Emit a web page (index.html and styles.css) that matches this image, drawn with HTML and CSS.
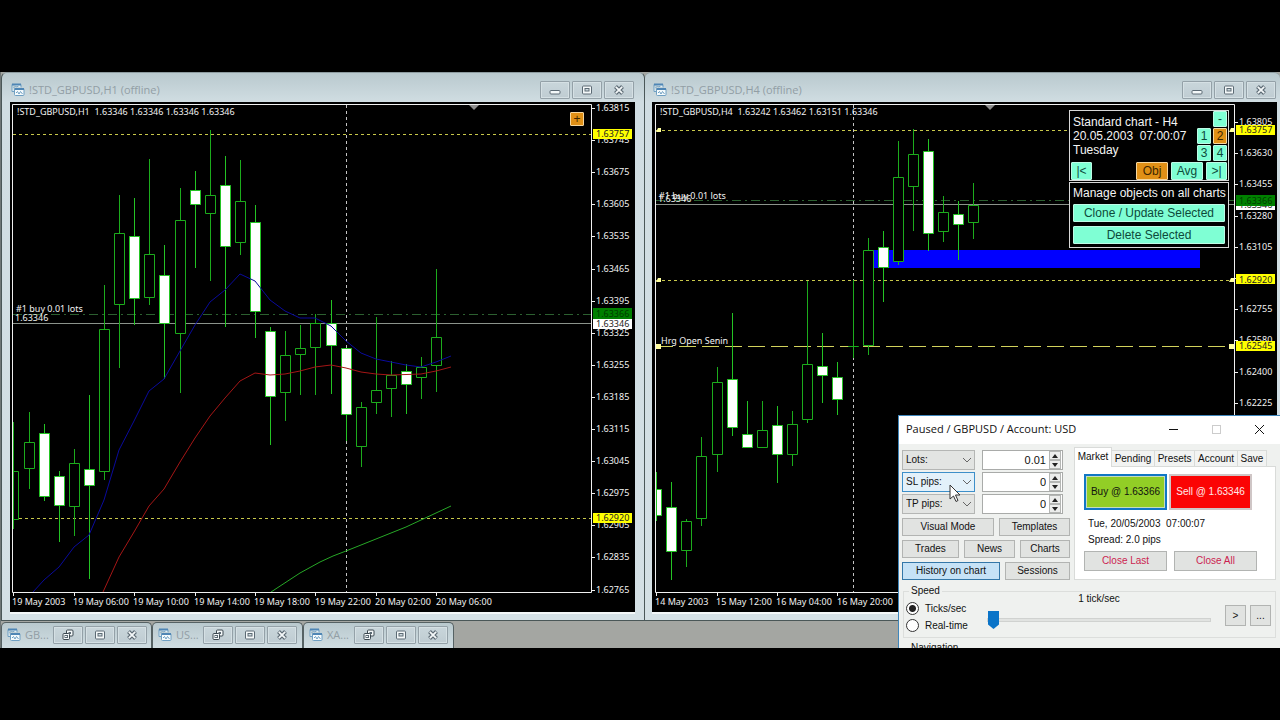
FILE: index.html
```html
<!DOCTYPE html>
<html lang="en">
<head>
<meta charset="utf-8">
<title>Forex Simulator</title>
<link rel="stylesheet" href="styles.css">
</head>
<body>
<svg class="defs" aria-hidden="true">
  <symbol id="i-chart" viewBox="0 0 14 14"><path d="M1 1.500h9v3M1 1.500v7h2" fill="#e4f0f6" stroke="#6f9fc2"/><path d="M1 1.500h9" stroke="#4f86b5" stroke-width="2"/><path d="M2.500 5l2-2 1 1 2-1" fill="none" stroke="#7fa8c4"/><rect x="3.500" y="5.500" width="9.500" height="7" rx="1" fill="#f4fafc" stroke="#6f9fc2"/><path d="M3.500 6h9.500" stroke="#4f86b5" stroke-width="2"/><path d="M5 10l1.500-1.500 1.500 2.500 1.500-2.500 2 2.500" fill="none" stroke="#6f9fc2"/></symbol>
  <symbol id="i-min" viewBox="0 0 12 12"><rect x="1" y="6.500" width="10" height="3.500" rx="1" fill="#f4f8f9" stroke="#5c6a74"/></symbol>
  <symbol id="i-max" viewBox="0 0 12 12"><rect x="1.500" y="2" width="9" height="8" rx="1" fill="#f4f8f9" stroke="#5c6a74"/><rect x="4" y="4.500" width="4" height="2.500" fill="#cfdbe0" stroke="#5c6a74"/></symbol>
  <symbol id="i-close" viewBox="0 0 12 12"><path d="M2.500 2.500l7 7M9.500 2.500l-7 7" stroke="#5c6a74" stroke-width="4"/><path d="M2.800 2.800l6.400 6.400M9.200 2.800l-6.400 6.400" stroke="#f4f8f9" stroke-width="1.800"/></symbol>
  <symbol id="i-restore" viewBox="0 0 12 12"><rect x="4.500" y="1" width="6.500" height="6" rx="1" fill="#f4f8f9" stroke="#3c4850"/><rect x="6.500" y="3" width="2.500" height="2" fill="#5c6a74"/><rect x="1" y="4.500" width="6.500" height="6" rx="1" fill="#f4f8f9" stroke="#3c4850"/><rect x="3" y="6.500" width="2.500" height="2" fill="none" stroke="#5c6a74"/></symbol>
</svg>

<main class="workspace">
  <div class="windows">
    <section class="window window-left">
      <header class="titlebar">
        <svg class="app-icon"><use href="#i-chart"/></svg>
        <h2>!STD_GBPUSD,H1 (offline)</h2>
        <div class="win-buttons">
          <button aria-label="Minimize"><svg><use href="#i-min"/></svg></button>
          <button aria-label="Maximize"><svg><use href="#i-max"/></svg></button>
          <button aria-label="Close"><svg><use href="#i-close"/></svg></button>
        </div>
      </header>
      <div class="chart-frame">
        <svg class="chart" viewBox="10 102 625 510" role="img" aria-label="GBPUSD H1 candlestick chart">
          <g class="back">
            <path class="vline" d="M346.500 105V592"/>
            <path class="level" d="M13 134.500H591M13 518.500H591"/>
            <path class="order" d="M13 314.500H591"/>
            <path class="bid" d="M13 323.500H591"/>
          </g>
          <g id="candles-h1"></g>
          <path class="ma blue" d="M33 592L44 580L59 567L74 547L89 535L104 500L119 450L134 421L149 391L164 379L180 351L195 325L210 302L225 290L240 274L255 281L270 300L285 311L300 318L315 318L331 326L346 341L361 353L376 359L391 362L406 365L421 367L436 362L451 356"/>
          <path class="ma red" d="M103 592L119 557L134 532L149 506L164 489L180 462L195 438L210 416L225 398L240 381L255 373L270 375L285 374L300 371L315 367L331 365L346 368L361 372L376 374L391 375L421 374L436 371L451 367"/>
          <path class="ma green" d="M271 592L300 573L320 562L333 556L346 551L376 539L406 527L421 520L451 506"/>
          <path class="frame" d="M12.500 592.500V104.500H591.500V592.500Z"/>
          <path class="frame" d="M13.500 593v3M74.500 593v3M134.500 593v3M195.500 593v3M255.500 593v3M315.500 593v3M376.500 593v3M436.500 593v3"/>
          <path d="M469 105h10l-5 5z" fill="#8c8c8c"/>
          <g class="txt">
            <text x="17" y="115">!STD_GBPUSD,H1  1.63346 1.63346 1.63346 1.63346</text>
            <text x="16" y="312">#1 buy 0.01 lots</text>
            <text x="15" y="321">1.63346</text>
            <text x="12" y="605">19 May 2003</text><text x="73" y="605">19 May 06:00</text><text x="133" y="605">19 May 10:00</text><text x="194" y="605">19 May 14:00</text><text x="254" y="605">19 May 18:00</text><text x="315" y="605">19 May 22:00</text><text x="375" y="605">20 May 02:00</text><text x="436" y="605">20 May 06:00</text>
          </g>
          <g id="axis-h1"></g>
          <rect x="593" y="129" width="39" height="10" fill="#ff0"/><text class="txt dark" x="596" y="137">1.63757</text>
          <rect x="593" y="308" width="39" height="11" fill="#008000"/><text class="txt deep" x="596" y="317">1.63366</text>
          <rect x="593" y="319" width="39" height="10" fill="#fff"/><text class="txt dark" x="596" y="327">1.63346</text>
          <rect x="593" y="513" width="39" height="10" fill="#ff0"/><text class="txt dark" x="596" y="521">1.62920</text>
        </svg>
        <button class="mini orange expand" aria-label="Expand panel">+</button>
      </div>
    </section>

    <section class="window window-right">
      <header class="titlebar">
        <svg class="app-icon"><use href="#i-chart"/></svg>
        <h2>!STD_GBPUSD,H4 (offline)</h2>
        <div class="win-buttons">
          <button aria-label="Minimize"><svg><use href="#i-min"/></svg></button>
          <button aria-label="Maximize"><svg><use href="#i-max"/></svg></button>
          <button aria-label="Close"><svg><use href="#i-close"/></svg></button>
        </div>
      </header>
      <div class="chart-frame">
        <svg class="chart" viewBox="652 102 625 510" role="img" aria-label="GBPUSD H4 candlestick chart">
          <path class="vline" d="M853.500 105V592"/>
          <rect x="873" y="250" width="327" height="18" fill="#00f"/>
          <path class="level" d="M656 130.500H1234M656 280.500H1234"/>
          <path class="order" d="M656 200.500H1234"/>
          <path class="bid" d="M656 204.500H1234"/>
          <path class="session" d="M656 346.500H1234"/>
          <g id="candles-h4"></g>
          <path class="frame" d="M655.500 592.500V104.500H1234.500V592.500Z"/>
          <path class="frame" d="M656.500 593v3M717.500 593v3M777.500 593v3M837.500 593v3"/>
          <path d="M985 105h10l-5 5z" fill="#8c8c8c"/>
          <path d="M656 344h5v5h-5zM1229 344h5v5h-5zM656 132l2-4h3v4zM656 282l2-4h3v4zM1229 132l2-4h3v4zM1229 282l2-4h3v4z" fill="#ffffa0"/>
          <g class="txt">
            <text x="660" y="115">!STD_GBPUSD,H4  1.63242 1.63462 1.63151 1.63346</text>
            <text x="659" y="199">#1 buy 0.01 lots</text>
            <text x="658" y="202">1.63346</text>
            <text x="661" y="344">Hrg Open Senin</text>
            <text x="655" y="605">14 May 2003</text><text x="716" y="605">15 May 12:00</text><text x="776" y="605">16 May 04:00</text><text x="837" y="605">16 May 20:00</text>
          </g>
          <g id="axis-h4"></g>
          <rect x="1236" y="125" width="39" height="10" fill="#ff0"/><text class="txt dark" x="1239" y="133">1.63757</text>
          <rect x="1236" y="200" width="39" height="10" fill="#fff"/><text class="txt dark" x="1239" y="208">1.63346</text>
          <rect x="1236" y="195" width="39" height="11" fill="#008000"/><text class="txt deep" x="1239" y="204">1.63366</text>
          <rect x="1236" y="274" width="39" height="10" fill="#ff0"/><text class="txt dark" x="1239" y="283">1.62920</text>
          <rect x="1236" y="341" width="39" height="10" fill="#ff0"/><text class="txt dark" x="1239" y="349">1.62545</text>
        </svg>
        <aside class="panel">
          <div class="panel-box panel-top">
            <div class="panel-info">
              <p>Standard chart - H4</p>
              <p>20.05.2003&nbsp; 07:00:07</p>
              <p>Tuesday</p>
            </div>
            <div class="panel-keys">
              <button class="mini last" aria-label="Collapse panel">-</button>
              <button class="mini">1</button><button class="mini orange">2</button>
              <button class="mini">3</button><button class="mini">4</button>
            </div>
            <div class="panel-nav">
              <button class="mini step">|&lt;</button>
              <button class="mini orange wide push">Obj</button>
              <button class="mini wide">Avg</button>
              <button class="mini step">&gt;|</button>
            </div>
          </div>
          <div class="panel-box panel-objects">
            <p>Manage objects on all charts</p>
            <button class="mini">Clone / Update Selected</button>
            <button class="mini">Delete Selected</button>
          </div>
        </aside>
      </div>
    </section>
  </div>

  <nav class="taskbar">
    <div class="task"><svg class="app-icon"><use href="#i-chart"/></svg><span>GB...</span>
      <div class="win-buttons"><button aria-label="Restore"><svg><use href="#i-restore"/></svg></button><button aria-label="Maximize"><svg><use href="#i-max"/></svg></button><button aria-label="Close"><svg><use href="#i-close"/></svg></button></div></div>
    <div class="task"><svg class="app-icon"><use href="#i-chart"/></svg><span>US...</span>
      <div class="win-buttons"><button aria-label="Restore"><svg><use href="#i-restore"/></svg></button><button aria-label="Maximize"><svg><use href="#i-max"/></svg></button><button aria-label="Close"><svg><use href="#i-close"/></svg></button></div></div>
    <div class="task"><svg class="app-icon"><use href="#i-chart"/></svg><span>XA...</span>
      <div class="win-buttons"><button aria-label="Restore"><svg><use href="#i-restore"/></svg></button><button aria-label="Maximize"><svg><use href="#i-max"/></svg></button><button aria-label="Close"><svg><use href="#i-close"/></svg></button></div></div>
  </nav>

  <section class="dialog">
    <header class="dialog-title">
      <h1>Paused / GBPUSD / Account: USD</h1>
      <button aria-label="Minimize"><svg viewBox="0 0 11 11"><path d="M1 5.500h9" stroke="#111"/></svg></button>
      <button aria-label="Maximize" disabled><svg viewBox="0 0 11 11"><rect x="1.500" y="1.500" width="8" height="8" fill="none" stroke="#ccc"/></svg></button>
      <button aria-label="Close"><svg viewBox="0 0 11 11"><path d="M1 1l9 9M10 1l-9 9" stroke="#111"/></svg></button>
    </header>
    <div class="dialog-body">
      <div class="columns">
        <div class="controls">
          <div class="field">
            <div class="drop"><select aria-label="Volume unit"><option>Lots:</option></select><svg viewBox="0 0 8 5"><path d="M0 0l4 4 4-4"/></svg></div>
            <div class="spin"><input type="text" value="0.01" aria-label="Lots"><div class="arrows"><button aria-label="Increase lots"><svg viewBox="0 0 6 4"><path d="M0 4l3-4 3 4z"/></svg></button><button aria-label="Decrease lots"><svg viewBox="0 0 6 4"><path d="M0 0l3 4 3-4z"/></svg></button></div></div>
          </div>
          <div class="field">
            <div class="drop hot"><select aria-label="Stop loss unit"><option>SL pips:</option></select><svg viewBox="0 0 8 5"><path d="M0 0l4 4 4-4"/></svg></div>
            <div class="spin"><input type="text" value="0" aria-label="SL pips"><div class="arrows"><button aria-label="Increase SL"><svg viewBox="0 0 6 4"><path d="M0 4l3-4 3 4z"/></svg></button><button aria-label="Decrease SL"><svg viewBox="0 0 6 4"><path d="M0 0l3 4 3-4z"/></svg></button></div></div>
          </div>
          <div class="field">
            <div class="drop"><select aria-label="Take profit unit"><option>TP pips:</option></select><svg viewBox="0 0 8 5"><path d="M0 0l4 4 4-4"/></svg></div>
            <div class="spin"><input type="text" value="0" aria-label="TP pips"><div class="arrows"><button aria-label="Increase TP"><svg viewBox="0 0 6 4"><path d="M0 4l3-4 3 4z"/></svg></button><button aria-label="Decrease TP"><svg viewBox="0 0 6 4"><path d="M0 0l3 4 3-4z"/></svg></button></div></div>
          </div>
          <div class="row row-modes"><button class="btn">Visual Mode</button><button class="btn">Templates</button></div>
          <div class="row row-lists"><button class="btn">Trades</button><button class="btn">News</button><button class="btn">Charts</button></div>
          <div class="row row-history"><button class="btn pressed">History on chart</button><button class="btn">Sessions</button></div>
        </div>
        <div class="market">
          <div class="tabs" role="tablist">
            <button role="tab" aria-selected="true">Market</button><button role="tab">Pending</button><button role="tab">Presets</button><button role="tab">Account</button><button role="tab">Save</button>
          </div>
          <div class="tab-page">
            <div class="deal"><button class="buy">Buy @ 1.63366</button><button class="sell">Sell @ 1.63346</button></div>
            <p>Tue, 20/05/2003&nbsp; 07:00:07</p>
            <p>Spread: 2.0 pips</p>
            <div class="closers"><button class="btn">Close Last</button><button class="btn">Close All</button></div>
          </div>
        </div>
      </div>
      <fieldset class="speed">
        <legend>Speed</legend>
        <div class="speed-grid">
          <div class="radios">
            <label><input type="radio" name="speed" checked>Ticks/sec</label>
            <label><input type="radio" name="speed">Real-time</label>
          </div>
          <div class="slider">
            <label for="rate">1 tick/sec</label>
            <input id="rate" type="range" min="0" max="20" value="0">
          </div>
          <div class="speed-buttons"><button class="btn">&gt;</button><button class="btn">...</button></div>
        </div>
      </fieldset>
      <fieldset class="navigation"><legend>Navigation</legend></fieldset>
    </div>
    <svg class="cursor" viewBox="0 0 12 19" aria-hidden="true"><path d="M1 1v14l3.500-3 2.500 5.500 2-1-2.500-5.500h4.500z" fill="#fff" stroke="#333"/></svg>
  </section>
</main>
<script src="chart.js"></script>
</body>
</html>
```
FILE: styles.css
```css
* { box-sizing: border-box; }
body {
  margin: 0;
  padding: 72px 0;
  min-height: 100vh;
  background: #000;
  font-family: "Liberation Sans", Arial, sans-serif;
  font-size: 10px;
  line-height: 12px;
  color: #111;
}
button, input, select { font: inherit; color: inherit; margin: 0; padding: 0; }
h1, h2, p { margin: 0; font-weight: normal; }
.defs { position: absolute; width: 0; height: 0; }

.workspace {
  position: relative;
  display: flex;
  flex-direction: column;
  gap: 1px;
  padding-left: 1px;
  overflow: hidden;
  background: linear-gradient(90deg, #6f7777 0 1px, #a4a6a2 1px);
}
.windows { display: grid; grid-template-columns: 644fr 635fr; }
.window {
  border: 1px solid #4a5758;
  border-top-color: #8d9b9f;
  border-radius: 6px 6px 0 0;
  background: linear-gradient(#b9c9ce, #d0dde2 29px, #d4e0e5);
  padding: 0 9px 6px 8px;
  min-width: 0;
}
.window-right { border-left: 0; border-right: 0; padding: 0 3px 6px 7px; }
.titlebar {
  display: flex;
  align-items: center;
  height: 29px;
  padding: 4px 1px 0 1px;
  gap: 4px;
}
.titlebar h2, .task span {
  flex: 1;
  font-family: "Open Sans", "Noto Sans", sans-serif;
  font-size: 11px;
  line-height: 16px;
  color: #929ea5;
}
.app-icon { width: 14px; height: 14px; flex: none; }
.win-buttons { display: flex; gap: 2px; }
.win-buttons button {
  display: grid;
  place-items: center;
  width: 30px;
  height: 18px;
  background: linear-gradient(#c9d6db, #bfccd2);
  border: 1px solid #94a1a8;
  border-radius: 1px;
  box-shadow: inset 0 0 0 1px #d5e0e4;
}
.win-buttons svg { width: 12px; height: 12px; }
.chart-frame { position: relative; background: #000; border-bottom: 2px solid #f3f7f8; }
.chart { display: block; width: 100%; height: auto; }

.txt, .dark, .deep { font: 9px "Noto Sans", "DejaVu Sans", sans-serif; fill: #f2f2f2; white-space: pre; }
.txt text { white-space: pre; }
.dark { fill: #222; }
.deep { fill: #003c00; }
.frame { fill: none; stroke: #f0f0f0; }
.vline { stroke: #c4c4c4; stroke-dasharray: 3 3; }
.level { stroke: #c8c84a; stroke-dasharray: 3 3; }
.order { stroke: #2c6030; stroke-dasharray: 9 4 2 4; }
.bid { stroke: #8b938b; }
.session { stroke: #d2d25c; stroke-dasharray: 17 6; }
.ma { fill: none; }
.ma.blue { stroke: #0a0a9c; }
.ma.red { stroke: #a51616; }
.ma.green { stroke: #27a827; }
.candle { stroke: #1cac1c; fill: #000; }
.candle.down { fill: #fff; stroke: #24c424; }

.mini {
  display: grid;
  place-items: center;
  height: 16px;
  min-width: 14px;
  background: #7fffd4;
  border: 1px solid #bdfbe6;
  border-radius: 1px;
  font-size: 12px;
  line-height: 14px;
  color: #0d4a3a;
}
.mini.orange { background: #e09016; border-color: #f5d7a0; color: #3c2600; }
.expand { position: absolute; top: 10px; right: 51px; height: 14px; line-height: 12px; }
.panel {
  position: absolute;
  top: 8px;
  right: 48px;
  width: 160px;
  color: #f4f4f4;
  font-size: 12px;
  line-height: 14px;
}
.panel-box { border: 1px solid #d8d8d8; background: #000; }
.panel-top { display: grid; grid-template-columns: 1fr auto; padding: 0 1px 0 3px; height: 71px; }
.panel-info { padding-top: 4px; white-space: nowrap; }
.panel-keys { display: grid; grid-template-columns: 14px 14px; gap: 1px 2px; grid-auto-rows: 16px; align-content: start; }
.panel-keys .last { grid-column: 2; }
.panel-nav { grid-column: 1 / -1; display: flex; gap: 3px; align-self: end; margin-left: -2px; }
.panel-nav .mini { height: 18px; }
.mini.step { width: 21px; }
.mini.wide { width: 32px; }
.mini.push { margin-left: auto; }
.panel-objects { display: flex; flex-direction: column; gap: 4px; padding: 3px; height: 66px; margin-top: 1px; }
.panel-objects p { white-space: nowrap; }
.panel-objects .mini { height: 18px; line-height: 16px; }

.taskbar { display: flex; }
.task {
  display: flex;
  align-items: center;
  gap: 4px;
  width: 151px;
  height: 26px;
  padding: 0 5px 2px;
  border: 1px solid #566264;
  border-bottom: 0;
  border-radius: 5px 5px 0 0;
  background: linear-gradient(#b9c9ce, #d0dde2);
}

.dialog {
  position: absolute;
  top: 343px;
  right: 0;
  bottom: 0;
  width: 382px;
  overflow: hidden;
  background: #eff1ef;
  border-top: 1px solid #3f86bb;
  border-left: 1px solid #3f86bb;
}
.dialog-title { display: flex; align-items: center; height: 28px; background: #fff; padding: 0 10px 2px 7px; }
.dialog-title h1 { flex: 1; font-family: "Open Sans", "Noto Sans", sans-serif; font-size: 11px; line-height: 16px; }
.dialog-title button { display: grid; place-items: center; width: 21px; height: 20px; border: 0; background: none; margin-left: 22px; }
.dialog-title svg { width: 11px; height: 11px; }
.dialog-body { padding: 3px 4px 0 3px; }
.columns { display: grid; grid-template-columns: 168px 1fr; gap: 4px; }
.controls { display: flex; flex-direction: column; gap: 4px; padding-top: 3px; }
.field { display: grid; grid-template-columns: 73px 81px; gap: 7px; height: 20px; margin-bottom: -2px; }
.field:nth-child(3) { margin-bottom: 0; }
.drop { position: relative; }
.drop select { appearance: none; width: 100%; height: 20px; padding: 0 3px; background: #e2e4e2; border: 1px solid #b4b6b4; border-radius: 0; }
.drop.hot select { background: #e3f1fa; border-color: #3d8fc9; }
.drop svg { position: absolute; right: 4px; top: 8px; width: 8px; height: 5px; fill: none; stroke: #666; pointer-events: none; }
.spin { display: flex; border: 1px solid #a9aba9; background: #fff; padding: 0 1px 0 0; }
.spin input { flex: 1; width: 0; border: 0; background: none; text-align: right; padding-right: 3px; outline: 0; font-size: 11px; }
.arrows { display: grid; width: 12px; }
.arrows button { display: grid; place-items: center; background: #ecedec; border: 1px solid #b4b6b4; }
.arrows svg { width: 6px; height: 4px; fill: #222; }
.row { display: grid; gap: 5px; }
.row-modes { grid-template-columns: 92fr 71fr; }
.row-lists { grid-template-columns: 57fr 51fr 50fr; }
.row-history { grid-template-columns: 98fr 65fr; }
.btn { height: 18px; background: #e1e3e1; border: 1px solid #b2b4b2; white-space: nowrap; }
.btn.pressed { background: #c6e2f6; border-color: #3477a8; }
.tabs { display: flex; align-items: flex-end; height: 19px; padding-right: 9px; }
.tabs button { flex: auto; height: 16px; border: 1px solid #d9dbd9; border-left: 0; border-bottom: 0; background: #f2f3f2; padding: 0 2px; }
.tabs [aria-selected] { height: 20px; margin-bottom: -1px; background: #fff; border-left: 1px solid #d9dbd9; z-index: 1; padding-bottom: 2px; }
.tab-page { height: 114px; padding: 7px 9px; background: #fff; border: 1px solid #d9dbd9; }
.deal { display: flex; gap: 2px; margin-bottom: 6px; }
.deal button { width: 83px; height: 36px; white-space: nowrap; }
.buy { background: #92ce26; border: 2px solid #1177c4; box-shadow: inset 0 0 0 1px #c4dcc0; }
.sell { background: #fb0404; border: 2px solid #cfc6c6; color: #ffe9e9; }
.tab-page p { padding-left: 4px; line-height: 16px; }
.closers { display: flex; gap: 7px; margin-top: 3px; }
.closers .btn { width: 83px; height: 20px; color: #cc1f50; }
fieldset { margin: 5px 0 0 1px; padding: 0; border: 1px solid #dcdedc; min-width: 0; }
.navigation { margin-top: 4px; }
legend { margin-left: 5px; padding: 0 2px; }
.speed-grid { display: grid; grid-template-columns: 80px 1fr auto; height: 40px; }
.radios { display: grid; grid-template-rows: 17px 17px; padding: 3px 0 0 2px; }
.radios label { display: flex; align-items: center; gap: 6px; }
.radios input { appearance: none; width: 13px; height: 13px; border: 1px solid #333; border-radius: 50%; background: #fff; }
.radios input:checked { background: radial-gradient(#222 0 3px, #fff 4px); }
.slider { display: flex; flex-direction: column; gap: 6px; margin-top: -4px; text-align: center; padding-left: 3px; }
.slider input { appearance: none; width: 100%; height: 18px; background: none; }
.slider input::-webkit-slider-runnable-track { height: 4px; background: #e1e3e1; border: 1px solid #d0d2d0; }
.slider input::-webkit-slider-thumb {
  appearance: none;
  width: 11px;
  height: 18px;
  margin-top: -8px;
  background: #0a74c8;
  clip-path: polygon(0 0, 100% 0, 100% 75%, 50% 100%, 0 75%);
}
.speed-buttons { display: flex; gap: 4px; padding: 8px 4px 0 14px; }
.speed-buttons .btn { width: 21px; height: 21px; }
.cursor { position: absolute; left: 50px; top: 68px; width: 12px; height: 19px; }
```
FILE: chart.js
```js
// Each candle: centre x, high, body top, body bottom, low, 1 when it closed down.
const H1 = [
  [29,412,442,468,489,0],[44,424,433,496,501,1],[59,471,476,505,542,1],[74,449,463,506,536,0],
  [89,395,469,485,579,1],[104,285,329,471,480,0],[119,195,233,304,368,0],[134,198,236,298,325,1],
  [149,159,254,297,305,0],[164,245,275,323,379,1],[180,188,220,333,393,0],[195,171,190,204,268,1],
  [210,130,195,213,281,0],[225,156,185,246,327,1],[240,160,201,242,255,0],[255,205,222,311,338,1],
  [270,327,331,396,445,1],[285,331,355,392,421,0],[300,325,348,354,395,0],[315,314,323,347,395,0],
  [331,300,323,345,394,1],[346,348,348,414,441,1],[361,402,407,446,467,0],[376,317,390,402,414,0],
  [391,361,375,388,417,0],[406,364,371,384,414,1],[421,357,367,377,399,0],[436,269,337,365,392,0]
];
const H4 = [
  [671,482,507,551,580,1],[686,519,521,550,567,0],[701,437,456,518,526,0],[717,367,382,454,472,0],
  [732,313,379,427,436,1],[747,401,434,447,448,1],[762,401,430,447,447,0],[777,406,425,454,483,1],
  [792,411,424,454,466,0],[807,281,364,419,423,0],[822,333,366,375,403,1],[837,362,377,399,415,1],
  [853,280,346,346,358,0],[868,238,250,345,355,0],[883,231,247,267,302,1],[898,141,177,261,265,0],
  [913,129,154,186,231,0],[928,139,151,233,251,1],[943,196,212,231,242,0],[958,201,214,224,260,1],
  [973,183,205,222,239,0]
];

const bars = (list) => list.map(([x, high, top, bottom, low, down]) =>
  `<path class="candle${down ? " down" : ""}" d="M${x + 0.5} ${high}V${top}M${x + 0.5} ${bottom}V${low}` +
  `M${x - 4.5} ${top + 0.5}h10V${bottom + 0.5}h-10z"/>`).join("");

// The oldest bar is cut in half by the left edge of each chart.
document.getElementById("candles-h1").innerHTML =
  '<path class="candle" d="M13.500 422V529M13.500 471.500H18.500V519.500H13.500"/>' + bars(H1);
document.getElementById("candles-h4").innerHTML =
  '<path class="candle down" d="M656.500 472V521M656.500 489.500H661.500V515.500H656.500z"/>' + bars(H4);

const axis = (x, y0, step, labels) => labels.map((label, i) => {
  const y = Math.round(y0 + step * i);
  return `<path class="frame" d="M${x} ${y + 0.5}h3"/><text class="txt" x="${x + 4}" y="${y + 3}">${label}</text>`;
}).join("");

const labelsH1 = Array.from({ length: 16 }, (_, i) => (1.63815 - 0.0007 * i).toFixed(5));
// The price under the 1.62920 tag is left out, since the tag covers it.
const labelsH4 = ["1.63805", "1.63630", "1.63455", "1.63280", "1.63105", "", "1.62755", "1.62580", "1.62400", "1.62225"];
document.getElementById("axis-h1").innerHTML = axis(592, 108, 32.1, labelsH1);
document.getElementById("axis-h4").innerHTML = axis(1235, 122, 31.2, labelsH4);
```
